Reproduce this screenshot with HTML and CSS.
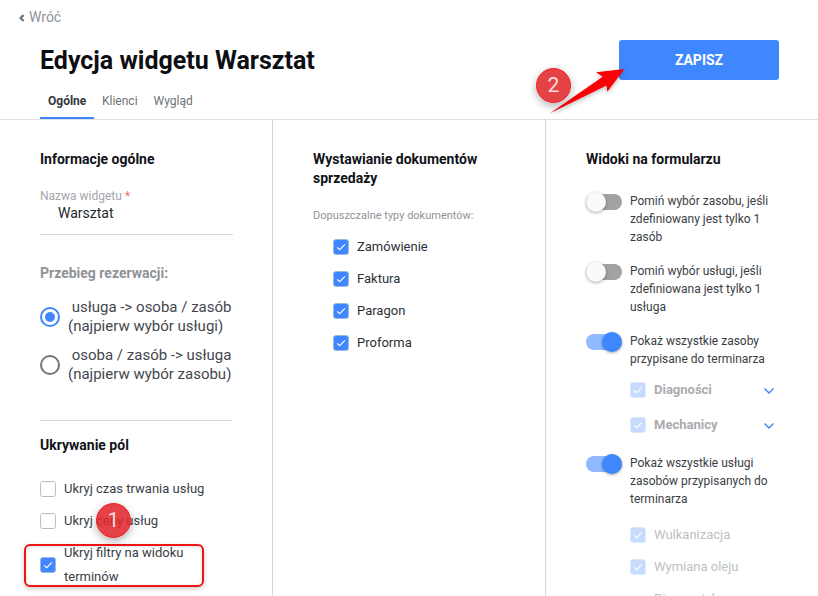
FILE: index.html
```html
<!DOCTYPE html>
<html lang="pl">
<head>
<meta charset="utf-8">
<title>Edycja widgetu Warsztat</title>
<link rel="stylesheet" href="styles.css">
</head>
<body>
<div class="page">
  <a class="back"><svg class="back-icon" viewBox="0 0 6 8"><path d="M4.6 1 1.6 4l3 3" /></svg>Wróć</a>
  <header class="head">
    <div class="head-left">
      <h1>Edycja widgetu Warsztat</h1>
      <nav class="tabs">
        <span class="tab active">Ogólne</span>
        <span class="tab">Klienci</span>
        <span class="tab">Wygląd</span>
      </nav>
    </div>
    <button class="save">ZAPISZ</button>
  </header>
  <main class="cols">
    <section class="col">
      <h2>Informacje ogólne</h2>
      <div class="field">
        <div class="field-label">Nazwa widgetu <span class="req">*</span></div>
        <div class="field-value">Warsztat</div>
      </div>
      <h3>Przebieg rezerwacji:</h3>
      <div class="radio-row"><span class="radio on"></span><span class="radio-text">&nbsp;usługa -&gt; osoba / zasób<br>(najpierw wybór usługi)</span></div>
      <div class="radio-row"><span class="radio"></span><span class="radio-text">&nbsp;osoba / zasób -&gt; usługa<br>(najpierw wybór zasobu)</span></div>
      <hr class="sep">
      <h2>Ukrywanie pól</h2>
      <div class="checks">
        <label class="check"><span class="box"></span><span>Ukryj czas trwania usług</span></label>
        <label class="check"><span class="box"></span><span>Ukryj ceny usług</span></label>
        <label class="check multi"><span class="box on"><svg viewBox="0 0 16 16"><path d="M3.5 8.5 6.5 11l6-6"/></svg></span><span>Ukryj filtry na widoku terminów</span></label>
      </div>
    </section>
    <section class="col">
      <h2>Wystawianie dokumentów sprzedaży</h2>
      <div class="doc-label">Dopuszczalne typy dokumentów:</div>
      <div class="docs">
        <label class="check"><span class="box on"><svg viewBox="0 0 16 16"><path d="M3.5 8.5 6.5 11l6-6"/></svg></span><span>Zamówienie</span></label>
        <label class="check"><span class="box on"><svg viewBox="0 0 16 16"><path d="M3.5 8.5 6.5 11l6-6"/></svg></span><span>Faktura</span></label>
        <label class="check"><span class="box on"><svg viewBox="0 0 16 16"><path d="M3.5 8.5 6.5 11l6-6"/></svg></span><span>Paragon</span></label>
        <label class="check"><span class="box on"><svg viewBox="0 0 16 16"><path d="M3.5 8.5 6.5 11l6-6"/></svg></span><span>Proforma</span></label>
      </div>
    </section>
    <section class="col">
      <h2>Widoki na formularzu</h2>
      <div class="switch-row first"><span class="switch"></span><span class="switch-text">Pomiń wybór zasobu, jeśli zdefiniowany jest tylko 1 zasób</span></div>
      <div class="switch-row"><span class="switch"></span><span class="switch-text">Pomiń wybór usługi, jeśli zdefiniowana jest tylko 1 usługa</span></div>
      <div class="switch-row"><span class="switch on"></span><span class="switch-text">Pokaż wszystkie zasoby przypisane do terminarza</span></div>
      <div class="subs bold">
        <div class="sub"><span class="box dim"><svg viewBox="0 0 16 16"><path d="M3.5 8.5 6.5 11l6-6"/></svg></span><span class="sub-text">Diagności</span><svg class="chev" viewBox="0 0 12 8"><path d="M1.5 1.5 6 6l4.500-4.500"/></svg></div>
        <div class="sub"><span class="box dim"><svg viewBox="0 0 16 16"><path d="M3.5 8.5 6.500 11l6-6"/></svg></span><span class="sub-text">Mechanicy</span><svg class="chev" viewBox="0 0 12 8"><path d="M1.5 1.5 6 6l4.500-4.500"/></svg></div>
      </div>
      <div class="switch-row"><span class="switch on"></span><span class="switch-text">Pokaż wszystkie usługi zasobów przypisanych do terminarza</span></div>
      <div class="subs light">
        <div class="sub"><span class="box dim"><svg viewBox="0 0 16 16"><path d="M3.5 8.5 6.5 11l6-6"/></svg></span><span class="sub-text">Wulkanizacja</span></div>
        <div class="sub"><span class="box dim"><svg viewBox="0 0 16 16"><path d="M3.5 8.5 6.500 11l6-6"/></svg></span><span class="sub-text">Wymiana oleju</span></div>
        <div class="sub"><span class="box blank"></span><span class="sub-text">Diagnostyka</span></div>
      </div>
    </section>
  </main>
  <div class="mark-rect"></div>
  <div class="badge badge-one">1</div>
  <svg class="arrow" viewBox="0 0 80 56"><path d="M1 53.300 53.700 16.700 47 12.300 75.500 9 58.300 31.700 57.500 25.500Z"/></svg>
  <div class="badge badge-two">2</div>
</div>
</body>
</html>
```
FILE: styles.css
```css
* { box-sizing: border-box; }
html, body { margin: 0; padding: 0; background: #fff; }
body { font-family: Roboto, "Liberation Sans", sans-serif; color: #1f2329; }
.page { position: relative; width: 818px; height: 596px; overflow: hidden; }

.back { position: absolute; left: 19px; top: 9px; font-size: 14px; line-height: 17px; color: #8d9299; display: flex; align-items: center; }
.back-icon { width: 6px; height: 8px; margin-right: 4px; fill: none; stroke: #6f747b; stroke-width: 2.4; }

.head { display: flex; justify-content: space-between; padding: 40px 39px 0 40px; height: 120px; border-bottom: 1px solid #dfe1e6; }
h1 { margin: 6px 0 0; font-size: 25px; line-height: 30px; font-weight: 700; color: #0c0e12; }
.tabs { display: flex; margin-top: 10px; }
.tab { height: 33px; padding: 8px 8px 0; font-size: 12px; line-height: 15px; color: #6e7278; }
.tab.active { color: #33363b; font-weight: 700; border-bottom: 2px solid #3f87fd; }
.tabs .tab:first-child { width: 54px; text-align: center; }
.save { width: 160px; height: 40px; border: 0; border-radius: 3px; background: #3f87ff; color: #fff; font: 700 14px Roboto, sans-serif; }

.cols { display: grid; grid-template-columns: 273px 273px 272px; height: 476px; }
.col { padding: 30px 40px 0; border-right: 1px solid #d3d9e4; }
.col:last-child { border-right: 0; padding-right: 30px; }
h2 { margin: 0; font-size: 14px; line-height: 19px; font-weight: 700; color: #111318; }

.field { margin-top: 20px; border-bottom: 1px solid #d3d9e4; height: 46px; width: 193px; }
.field-label { font-size: 12px; line-height: 14px; color: #a3a6ab; }
.req { color: #f06a6a; }
.field-value { margin: 2px 0 0 18px; font-size: 14px; line-height: 17px; color: #24272c; }
h3 { margin: 30px 0 0; font-size: 14px; line-height: 17px; font-weight: 700; color: #8f9297; }
.radio-row { display: flex; align-items: center; width: 200px; }
h3 + .radio-row { margin-top: 16px; }
.radio-row + .radio-row { margin-top: 10px; }
.radio { width: 20px; height: 20px; border-radius: 50%; border: 2px solid #757575; flex: none; margin-right: 8px; position: relative; }
.radio.on { border-color: #3f87ff; }
.radio.on::after { content: ""; position: absolute; left: 3px; top: 3px; width: 10px; height: 10px; border-radius: 50%; background: #3f87ff; }
.radio-text { font-size: 15px; line-height: 19px; color: #43474d; white-space: nowrap; }
.sep { width: 192px; height: 1px; border: 0; background: #d3d9e4; margin: 36px 0 15px; }

.checks { margin-top: 26px; display: flex; flex-direction: column; gap: 16px; }
.check { display: flex; align-items: center; font-size: 13px; line-height: 16px; color: #3a3e44; }
.box { width: 16px; height: 16px; border: 1px solid #bdbdbd; border-radius: 3px; flex: none; margin-right: 8px; background: #fff; display: block; }
.box svg { display: block; width: 14px; height: 14px; fill: none; stroke: #fff; stroke-width: 1.300; }
.box.on { background: #3f87ff; border-color: #9fb7dc; }
.box.dim { background: #c6dbfd; border-color: #dce8fb; }
.box.blank { visibility: hidden; }
.check.multi { line-height: 24px; width: 170px; margin-top: -4px; }

.doc-label { margin-top: 21px; font-size: 11px; line-height: 14px; color: #909398; }
.docs { margin: 16px 0 0 20px; display: flex; flex-direction: column; gap: 16px; }
.docs .check { color: #2c3036; }

.switch-row { display: flex; margin-top: 16px; font-size: 12px; line-height: 18px; color: #3a3e44; }
.switch-row.first { margin-top: 23px; }
.switch { position: relative; flex: none; width: 36px; height: 16px; margin: 2px 8px 0 0; border-radius: 8px; background: #a2a2a2; }
.switch::after { content: ""; position: absolute; left: 0; top: -2px; width: 20px; height: 20px; border-radius: 50%; background: #fafafa; box-shadow: 0 1px 3px rgba(0,0,0,.35); }
.switch.on { background: #8fbaff; }
.switch.on::after { left: 16px; background: #3f87ff; }
.subs { margin: 14px 0 21px 44px; display: flex; flex-direction: column; }
.sub { display: flex; align-items: center; height: 16px; font-size: 13px; line-height: 16px; }
.sub + .sub { margin-top: 19px; }
.subs.bold .sub-text { font-weight: 700; color: #a9abae; width: 109px; flex: none; }
.subs.light { margin-top: 19px; }
.subs.light .sub + .sub { margin-top: 16px; }
.subs.light .sub-text { color: #bdbfc3; }
.chev { width: 12px; height: 8px; flex: none; fill: none; stroke: #4a86f5; stroke-width: 1.500; margin-top: 2px; }

.mark-rect { position: absolute; left: 24px; top: 544px; width: 180px; height: 43px; border: 2px solid #f01414; border-radius: 6px; box-shadow: 0 2px 5px rgba(0,0,0,.2), inset 0 1px 4px rgba(0,0,0,.12); }
.badge { position: absolute; width: 35px; height: 35px; border-radius: 50%; background: rgba(224,38,42,.87); border: 1px solid #f01f24; box-shadow: 0 3px 8px rgba(0,0,0,.3); color: #fbdcdc; font-size: 21px; line-height: 33px; text-align: center; }
.badge-one { left: 96px; top: 503px; }
.badge-two { left: 536px; top: 68px; }
.arrow { position: absolute; left: 549px; top: 60px; width: 80px; height: 56px; fill: #fb0007; filter: drop-shadow(0 2px 2px rgba(0,0,0,.25)); }
```
